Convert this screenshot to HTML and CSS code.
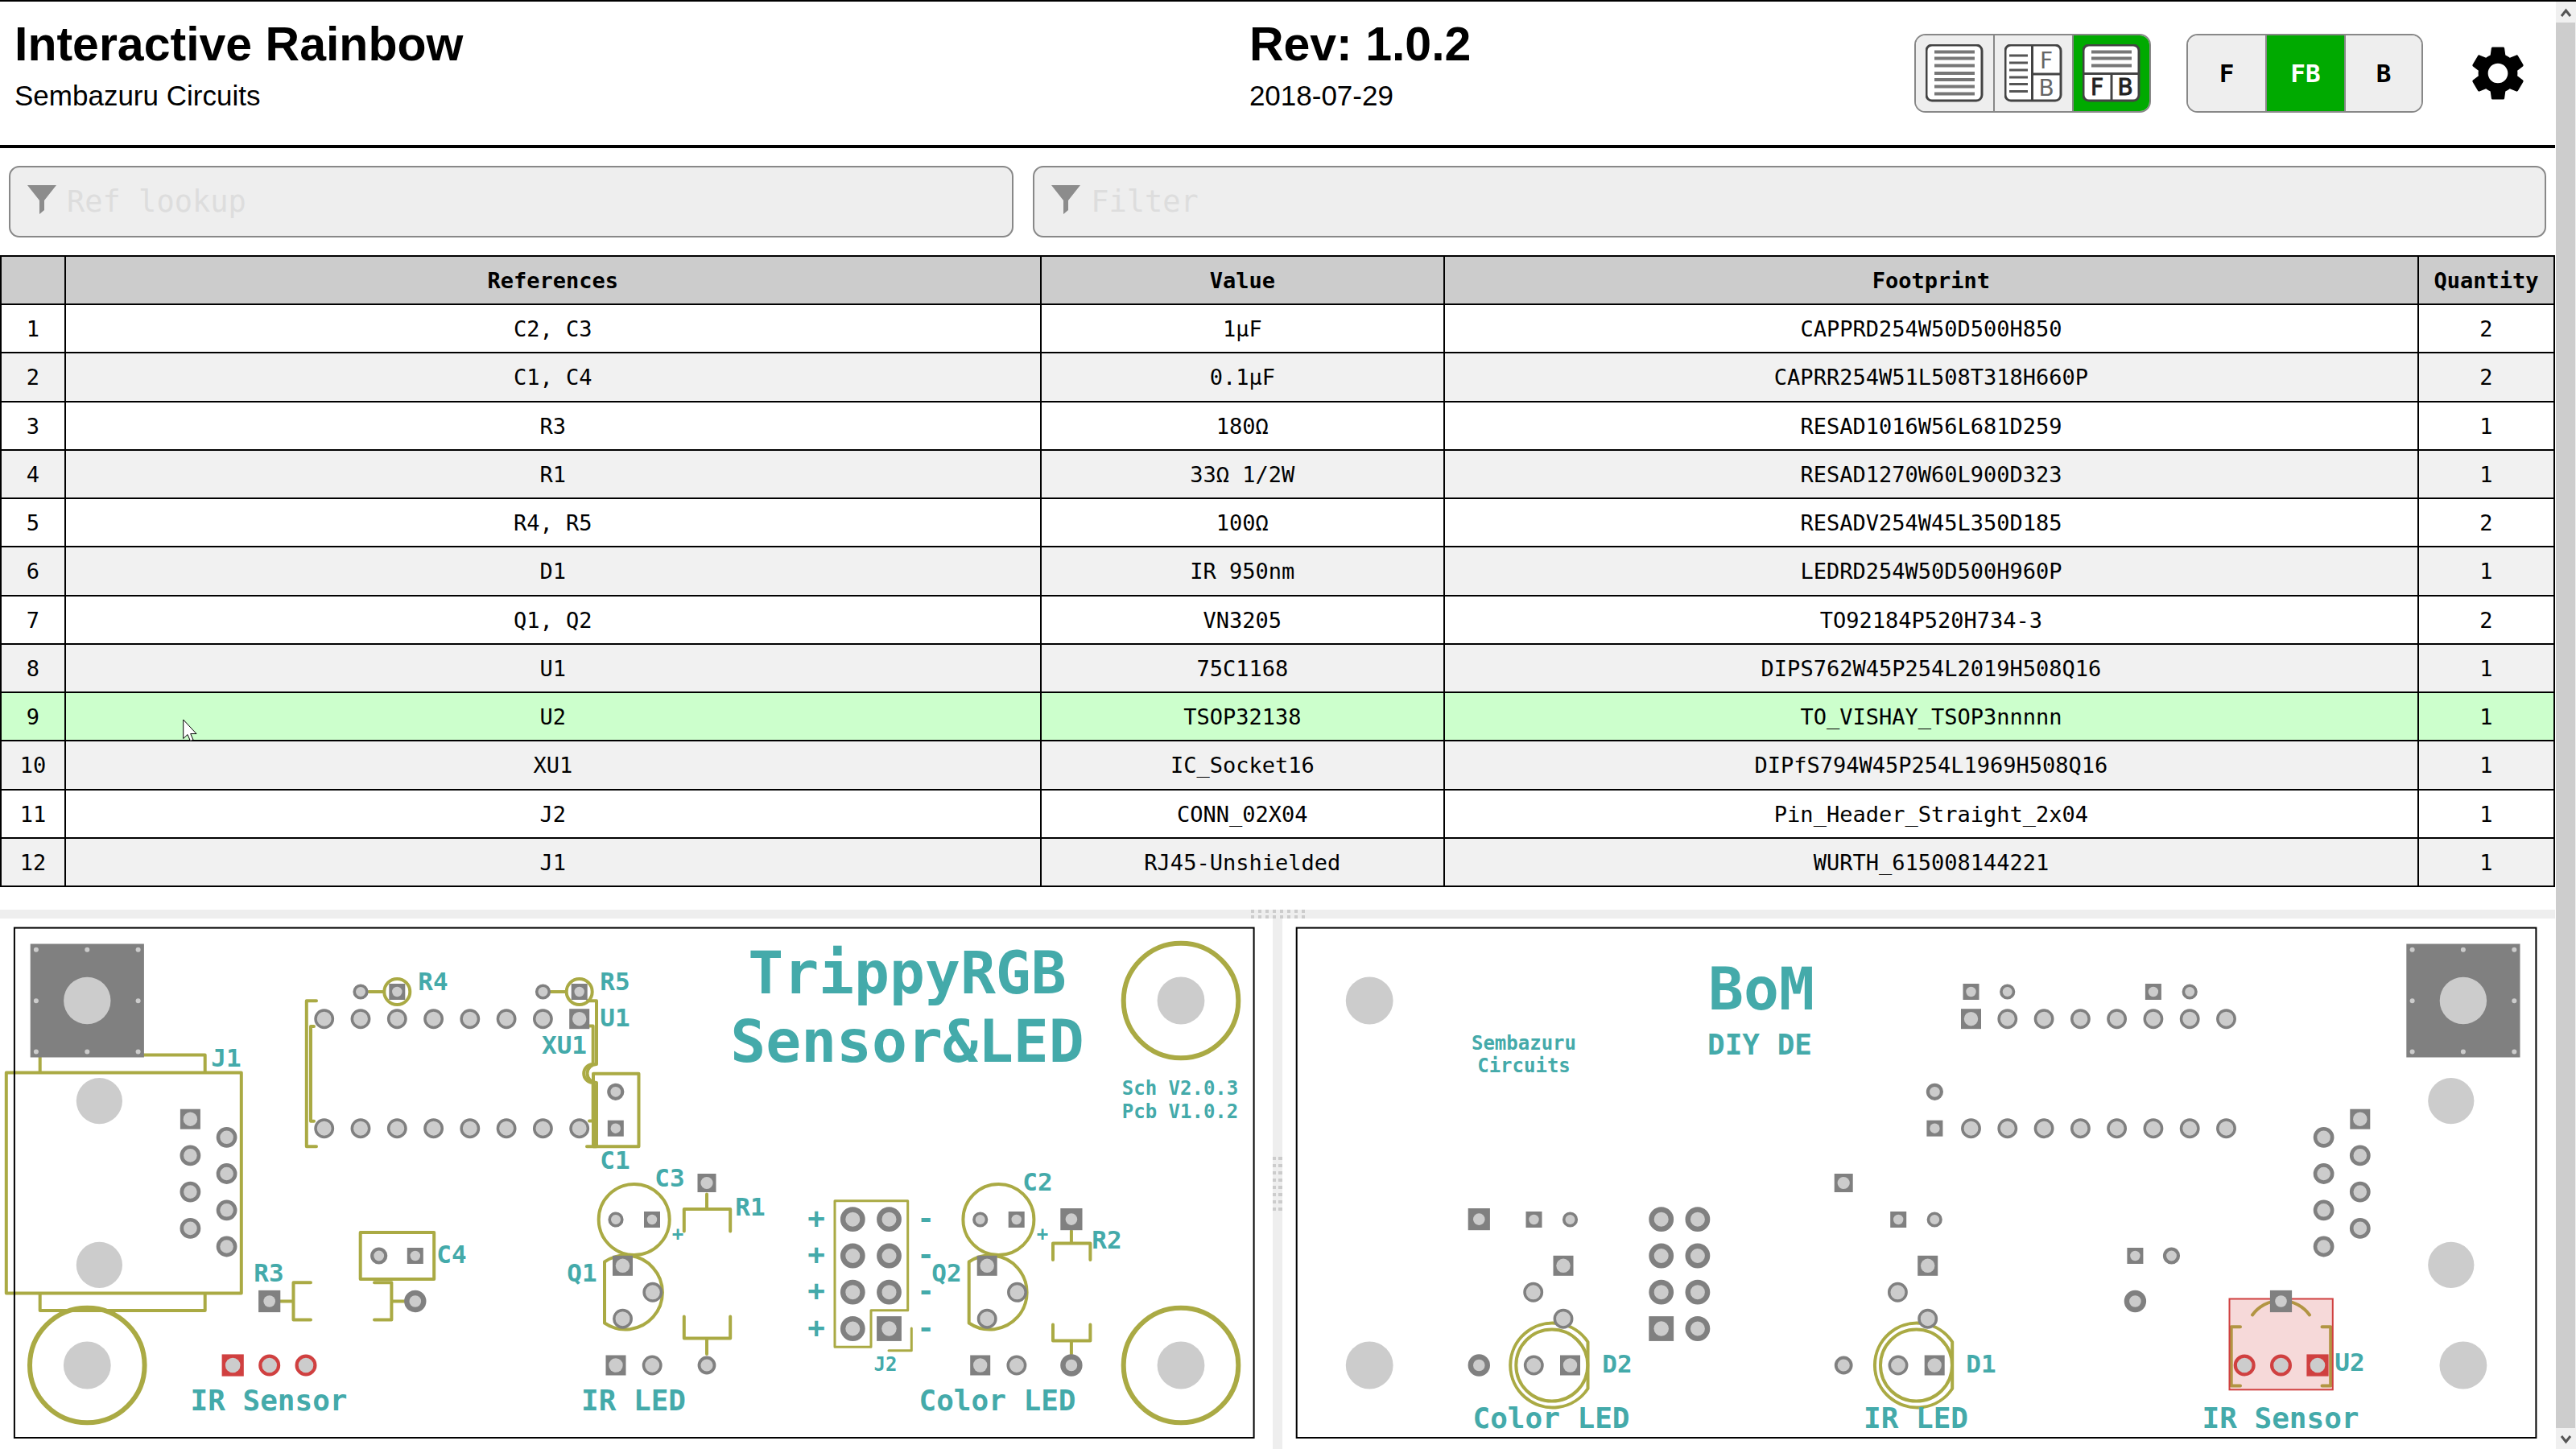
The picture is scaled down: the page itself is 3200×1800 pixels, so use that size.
FILE: index.html
```html
<!DOCTYPE html>
<html lang="en">
<head>
<meta charset="utf-8">
<meta name="viewport" content="width=device-width, initial-scale=1">
<title>Interactive BOM: Interactive Rainbow</title>
<link rel="stylesheet" href="styles.css">
</head>
<body>
<div class="window">
<main class="page">
  <header class="topbar">
    <div class="info project">
      <h1>Interactive Rainbow</h1>
      <p>Sembazuru Circuits</p>
    </div>
    <div class="info revision">
      <h2>Rev: 1.0.2</h2>
      <p>2018-07-29</p>
    </div>
    <div class="button-group" role="group" aria-label="Layout">
      <button type="button" aria-label="BOM only">
        <svg class="layout-icon" viewBox="0 0 72 72">
          <rect class="sheet" x="1" y="1" width="69" height="69" rx="7"/>
          <path class="rule" d="M11 9.500H61M11 17.500H61M11 26.500H61M11 36H61M11 44H61M11 52.500H61M11 61.500H61"/>
        </svg>
      </button>
      <button type="button" aria-label="BOM left, drawings right">
        <svg class="layout-icon" viewBox="0 0 72 72">
          <rect class="sheet" x="1" y="1" width="69" height="69" rx="7"/>
          <path class="rule dark" d="M6 14H29M6 23H29M6 32H29M6 41H29M6 49.500H29M6 58.500H29"/>
          <path class="divide" d="M34.500 1V70M34.500 37H70"/>
          <text class="light" x="52" y="30">F</text>
          <text class="light" x="52" y="64">B</text>
        </svg>
      </button>
      <button type="button" class="on" aria-label="BOM top, drawings bottom">
        <svg class="layout-icon" viewBox="0 0 72 72">
          <rect class="sheet" x="1" y="1" width="69" height="69" rx="7"/>
          <path class="rule" d="M11 9.500H61M11 17.500H61M11 26.500H61"/>
          <path class="divide" d="M1 36.500H70M36 36.500V70"/>
          <text x="18" y="63">F</text>
          <text x="53" y="63">B</text>
        </svg>
      </button>
    </div>
    <div class="button-group sides" role="group" aria-label="Board side">
      <button type="button">F</button>
      <button type="button" class="on">FB</button>
      <button type="button">B</button>
    </div>
    <button type="button" class="settings" aria-label="Settings">
      <svg viewBox="0 0 24 24"><path d="M19.430 12.980c.04-.32.07-.64.07-.98s-.03-.66-.07-.98l2.110-1.650c.19-.15.24-.42.12-.64l-2-3.460c-.12-.22-.39-.3-.61-.22l-2.490 1c-.52-.4-1.080-.73-1.690-.98l-.38-2.650C14.460 2.180 14.250 2 14 2h-4c-.25 0-.46.18-.49.42l-.38 2.650c-.61.25-1.170.59-1.690.98l-2.490-1c-.23-.09-.49 0-.61.22l-2 3.460c-.13.22-.07.49.12.64l2.110 1.650c-.04.32-.07.65-.07.98s.03.66.07.98l-2.110 1.650c-.19.15-.24.42-.12.64l2 3.460c.12.22.39.3.61.22l2.490-1c.52.4 1.080.73 1.690.98l.38 2.650c.03.24.24.42.49.42h4c.25 0 .46-.18.49-.42l.38-2.650c.61-.25 1.170-.59 1.690-.98l2.490 1c.23.09.49 0 .61-.22l2-3.460c.12-.22.07-.49-.12-.64l-2.110-1.650zM12 15.800c-2.100 0-3.800-1.700-3.800-3.800s1.700-3.800 3.800-3.800 3.800 1.700 3.800 3.800-1.700 3.800-3.800 3.800z"/></svg>
    </button>
  </header>

  <div class="filters">
    <label class="search">
      <svg viewBox="0 0 36 36" aria-hidden="true"><path d="M0 0H36L21 19V31L15 36V19Z"/></svg>
      <input type="text" placeholder="Ref lookup" aria-label="Ref lookup">
    </label>
    <label class="search">
      <svg viewBox="0 0 36 36" aria-hidden="true"><path d="M0 0H36L21 19V31L15 36V19Z"/></svg>
      <input type="text" placeholder="Filter" aria-label="Filter">
    </label>
  </div>

  <table class="bom">
    <colgroup><col class="col-num"><col class="col-refs"><col class="col-value"><col><col class="col-qty"></colgroup>
    <thead>
      <tr><th></th><th>References</th><th>Value</th><th>Footprint</th><th>Quantity</th></tr>
    </thead>
    <tbody>
      <tr><td>1</td><td>C2, C3</td><td>1µF</td><td>CAPPRD254W50D500H850</td><td>2</td></tr>
      <tr><td>2</td><td>C1, C4</td><td>0.1µF</td><td>CAPRR254W51L508T318H660P</td><td>2</td></tr>
      <tr><td>3</td><td>R3</td><td>180Ω</td><td>RESAD1016W56L681D259</td><td>1</td></tr>
      <tr><td>4</td><td>R1</td><td>33Ω 1/2W</td><td>RESAD1270W60L900D323</td><td>1</td></tr>
      <tr><td>5</td><td>R4, R5</td><td>100Ω</td><td>RESADV254W45L350D185</td><td>2</td></tr>
      <tr><td>6</td><td>D1</td><td>IR 950nm</td><td>LEDRD254W50D500H960P</td><td>1</td></tr>
      <tr><td>7</td><td>Q1, Q2</td><td>VN3205</td><td>TO92184P520H734-3</td><td>2</td></tr>
      <tr><td>8</td><td>U1</td><td>75C1168</td><td>DIPS762W45P254L2019H508Q16</td><td>1</td></tr>
      <tr class="highlighted"><td>9</td><td class="pointed">U2<svg class="pointer" viewBox="0 0 18 28" aria-hidden="true"><path d="M.7 1V24.500L6 19.500L9.500 27.500L13 26L9.700 18.500H17Z"/></svg></td><td>TSOP32138</td><td>TO_VISHAY_TSOP3nnnnn</td><td>1</td></tr>
      <tr><td>10</td><td>XU1</td><td>IC_Socket16</td><td>DIPfS794W45P254L1969H508Q16</td><td>1</td></tr>
      <tr><td>11</td><td>J2</td><td>CONN_02X04</td><td>Pin_Header_Straight_2x04</td><td>1</td></tr>
      <tr><td>12</td><td>J1</td><td>RJ45-Unshielded</td><td>WURTH_615008144221</td><td>1</td></tr>
    </tbody>
  </table>

  <div class="gutter gutter-row"><span class="grip"></span></div>

  <div class="boards">
    <svg class="board" viewBox="0 1141 1581 659" role="img" aria-label="Front of board">
      <defs>
        <circle id="pad" r="10.700" stroke-width="3.500"/>
        <circle id="pad-s" r="7.800" stroke-width="3.600"/>
        <circle id="pad-c" r="8.500" stroke-width="4.200"/>
        <circle id="pad-j" r="10.600" stroke-width="4.600"/>
        <circle id="pad-r" r="9.500" stroke-width="3.800"/>
        <circle id="pad-w" r="10.500" stroke-width="6.400"/>
        <circle id="pad-h" r="12.200" stroke-width="6.400"/>
        <circle id="pad-u" r="11.400" stroke-width="4.200"/>
        <g id="box-s"><rect class="metal" x="-10" y="-10" width="20" height="20"/><circle class="drill" r="6.200"/></g>
        <g id="box"><rect class="metal" x="-12.500" y="-12.500" width="25" height="25"/><circle class="drill" r="8.700"/></g>
        <g id="box-r"><rect class="metal" x="-11.500" y="-11.500" width="23" height="23"/><circle class="drill" r="7.600"/></g>
        <g id="box-w"><rect class="metal" x="-13.600" y="-13.600" width="27.200" height="27.200"/><circle class="drill" r="7.300"/></g>
        <g id="box-h"><rect class="metal" x="-15.400" y="-15.400" width="30.800" height="30.800"/><circle class="drill" r="9.200"/></g>
        <g id="to92-pads">
          <use href="#pad-s" x="765" y="1515"/><use href="#box-s" x="810" y="1515"/>
          <use href="#box" x="773.500" y="1572.300"/><use href="#pad" x="810.800" y="1605.300"/><use href="#pad" x="773.500" y="1638.200"/>
          <use href="#box" x="765" y="1696"/><use href="#pad" x="810.200" y="1696"/>
        </g>
        <g id="all-pads" class="pads">
          <rect class="metal" x="37.700" y="1172.500" width="141.200" height="141"/>
          <g class="drill">
            <circle cx="108.300" cy="1243" r="29.200"/>
            <circle cx="44.900" cy="1179.700" r="3"/><circle cx="108.300" cy="1179.700" r="3"/><circle cx="171.600" cy="1179.700" r="3"/>
            <circle cx="44.900" cy="1243.200" r="3"/><circle cx="171.600" cy="1243.200" r="3"/>
            <circle cx="44.900" cy="1306.600" r="3"/><circle cx="108.300" cy="1306.600" r="3"/><circle cx="171.600" cy="1306.600" r="3"/>
            <circle cx="108.300" cy="1696" r="29.400"/><circle cx="1467" cy="1243" r="29.400"/><circle cx="1467" cy="1696" r="29.400"/>
            <circle cx="123.400" cy="1367.600" r="28.600"/><circle cx="123.400" cy="1571.400" r="28.600"/>
          </g>
          <use href="#pad-s" x="448" y="1232"/><use href="#box-s" x="493.300" y="1232"/>
          <use href="#pad-s" x="674.500" y="1232"/><use href="#box-s" x="719.700" y="1232"/>
          <use href="#pad" x="402.700" y="1265.700"/><use href="#pad" x="448" y="1265.700"/><use href="#pad" x="493.300" y="1265.700"/><use href="#pad" x="538.600" y="1265.700"/><use href="#pad" x="583.800" y="1265.700"/><use href="#pad" x="629.100" y="1265.700"/><use href="#pad" x="674.400" y="1265.700"/><use href="#box" x="719.700" y="1265.700"/>
          <use href="#pad" x="402.700" y="1401.700"/><use href="#pad" x="448" y="1401.700"/><use href="#pad" x="493.300" y="1401.700"/><use href="#pad" x="538.600" y="1401.700"/><use href="#pad" x="583.800" y="1401.700"/><use href="#pad" x="629.100" y="1401.700"/><use href="#pad" x="674.400" y="1401.700"/><use href="#pad" x="719.700" y="1401.700"/>
          <use href="#pad-c" x="764.800" y="1356.300"/><use href="#box-s" x="764.800" y="1401.700"/>
          <use href="#box" x="236.400" y="1390.200"/><use href="#pad-j" x="236.400" y="1435.400"/><use href="#pad-j" x="236.400" y="1480.600"/><use href="#pad-j" x="236.400" y="1525.900"/>
          <use href="#pad-j" x="281.600" y="1412.800"/><use href="#pad-j" x="281.600" y="1458"/><use href="#pad-j" x="281.600" y="1503.300"/><use href="#pad-j" x="281.600" y="1548.500"/>
          <use href="#pad-c" x="470.700" y="1560"/><use href="#box-s" x="515.800" y="1560"/>
          <use href="#box-w" x="334.700" y="1616.500"/><use href="#pad-w" x="515.800" y="1616.500"/>
          <use href="#to92-pads"/><use href="#to92-pads" x="452.700"/>
          <use href="#box-r" x="878" y="1469.500"/><use href="#pad-r" x="878" y="1696"/>
          <use href="#box-w" x="1330.900" y="1514.600"/><use href="#pad-w" x="1330.900" y="1696"/>
          <use href="#pad-h" x="1059.300" y="1514.700"/><use href="#pad-h" x="1104.500" y="1514.700"/><use href="#pad-h" x="1059.300" y="1560"/><use href="#pad-h" x="1104.500" y="1560"/><use href="#pad-h" x="1059.300" y="1605.200"/><use href="#pad-h" x="1104.500" y="1605.200"/><use href="#pad-h" x="1059.300" y="1650.500"/><use href="#box-h" x="1104.500" y="1650.500"/>
          <g class="active">
            <rect class="metal" x="275.600" y="1682.400" width="27.200" height="27.200"/><circle class="drill" cx="289.200" cy="1696" r="9.300"/>
            <use href="#pad-u" x="334.700" y="1696"/><use href="#pad-u" x="380" y="1696"/>
          </g>
        </g>
        <g id="to92-silk">
          <circle cx="787.700" cy="1515" r="44"/>
          <path d="M751 1567.500A46 46 0 1 1 751 1643.500Z"/>
        </g>
        <g id="led-silk">
          <circle cx="1927.800" cy="1696" r="44.500"/>
          <path d="M1972.500 1667A52.500 52.500 0 1 0 1972.500 1725Z"/>
        </g>
      </defs>
      <g class="silk">
        <circle class="ring" cx="108.300" cy="1696" r="71.300"/><circle class="ring" cx="1467" cy="1243" r="71.300"/><circle class="ring" cx="1467" cy="1696" r="71.300"/>
        <path d="M7.800 1332.500H299.800V1606.600H7.800ZM49.700 1332V1310.500H254.700V1332M49.700 1607V1628H254.700V1607"/>
        <path d="M393 1243.200H380.800V1424.300H393M390 1275H386V1392.700H390"/>
        <path d="M730 1243.300H741V1322A11.500 11.500 0 0 0 741 1345V1424.300H729"/>
        <path d="M732 1274.500H736.700V1322A11.500 11.500 0 0 0 736.700 1345V1392.500H732"/>
        <path d="M737 1333.700H793.500V1424.300H737Z"/>
        <path d="M458 1232H477"/><circle cx="493.300" cy="1232" r="16"/><path d="M684 1232H703"/><circle cx="719.700" cy="1232" r="16"/>
        <path d="M447.700 1531H539.200V1589H447.700Z"/>
        <path d="M386 1593.200H364.500V1639.500H386M348 1616.500H364.500M465 1593.200H486.400V1639.500H465M486.400 1616.500H503"/>
        <path d="M878 1483.500V1502M849.800 1529.500V1502H907.200V1529.500M849.800 1635.500V1662.500H907.200V1635.500M878 1662.500V1682"/>
        <path d="M1330.900 1529V1544.500M1308 1565V1544.500H1354.400V1565M1308 1645.500V1665.500H1354.400V1645.500M1330.900 1665.500V1682"/>
        <use href="#to92-silk"/><use href="#to92-silk" x="452.700"/>
        <path class="thin" d="M1037 1491.700H1127.700V1627.800H1082V1673.300H1037ZM1132.300 1650V1677.700H1104"/>
      </g>
      <rect class="edge" x="17.900" y="1152.600" width="1539.700" height="633.400"/>
      <use href="#all-pads"/>
      <g class="label">
        <g class="huge"><text x="1127" y="1234">TrippyRGB</text><text x="1127" y="1319">Sensor&amp;LED</text></g>
        <g class="large"><text x="334" y="1752">IR Sensor</text><text x="787" y="1752">IR LED</text><text x="1239" y="1752">Color LED</text>
          <text x="1014" y="1526">+</text><text x="1014" y="1571">+</text><text x="1014" y="1616">+</text><text x="1014" y="1662">+</text>
          <text x="1150" y="1526">-</text><text x="1150" y="1571">-</text><text x="1150" y="1616">-</text><text x="1150" y="1662">-</text></g>
        <text x="538" y="1230">R4</text><text x="764" y="1230">R5</text><text x="764" y="1275">U1</text><text x="701" y="1309">XU1</text>
        <text x="281" y="1325">J1</text><text x="764" y="1452">C1</text><text x="832" y="1474">C3</text><text x="932" y="1510">R1</text>
        <text x="1289" y="1479">C2</text><text x="1375" y="1551">R2</text><text x="723" y="1592">Q1</text><text x="1176" y="1592">Q2</text>
        <text x="334" y="1592">R3</text><text x="561" y="1569">C4</text>
        <g class="small"><text x="1466" y="1360">Sch V2.0.3</text><text x="1466" y="1389">Pcb V1.0.2</text><text x="1100" y="1703">J2</text><text x="842" y="1541">+</text><text x="1295" y="1541">+</text></g>
      </g>
    </svg>

    <div class="gutter gutter-col"><span class="grip"></span></div>

    <svg class="board" viewBox="1593 1141 1581 659" role="img" aria-label="Back of board">
      <rect class="edge" x="1610.700" y="1152.600" width="1539.700" height="633.400"/>
      <g class="silk">
        <use href="#led-silk"/><use href="#led-silk" x="452.700"/>
        <path d="M2783 1648.200H2771.700V1721.500H2783M2884.500 1648.200H2895.200V1721.500H2884.500M2798 1633.500A44 44 0 0 1 2869 1633.500"/>
      </g>
      <rect class="bounds" x="2769.500" y="1613.500" width="128.300" height="112.800"/>
      <use href="#all-pads" transform="translate(3168.200 0) scale(-1 1)"/>
      <g class="label">
        <text class="huge" x="2188" y="1254">BoM</text>
        <g class="large"><text x="2186" y="1310">DIY DE</text><text x="1927" y="1774">Color LED</text><text x="2380" y="1774">IR LED</text><text x="2833" y="1774">IR Sensor</text></g>
        <g class="small"><text x="1893" y="1304">Sembazuru</text><text x="1893" y="1332">Circuits</text></g>
        <text x="2009" y="1705">D2</text><text x="2461" y="1705">D1</text><text x="2919" y="1703">U2</text>
      </g>
    </svg>
  </div>
</main>
<div class="scrollbar" aria-hidden="true">
  <svg viewBox="0 0 24 26"><path d="M7 18L12.500 11L18 18"/></svg>
  <div class="thumb"></div>
  <svg viewBox="0 0 24 26"><path d="M7 10L12.500 17L18 10"/></svg>
</div>
</div>
</body>
</html>
```
FILE: styles.css
```css
* { box-sizing: border-box; }

body {
  margin: 0;
  background: #fff;
  color: #000;
  font-family: Consolas, "DejaVu Sans Mono", monospace;
  font-size: 27px;
}

h1, h2, p { margin: 0; }

button, input { font: inherit; color: inherit; }

.window {
  display: grid;
  grid-template-columns: minmax(0, 1fr) 26px;
  min-height: 100vh;
  border-top: 2px solid #000;
}

/* Title bar */
.topbar {
  display: flex;
  align-items: center;
  padding: 0 32px 0 18px;
  border-bottom: 4px solid #000;
}

.info {
  align-self: flex-start;
  padding: 20px 0 40px;
  font-family: Arial, "Liberation Sans", sans-serif;
}

.project { flex: 0 0 49.1%; }
.revision { flex: 1; }

.info h1, .info h2 { font-size: 59px; line-height: 66px; }
.info p { margin-top: 10px; font-size: 35px; line-height: 42px; }

.button-group {
  display: flex;
  height: 98px;
  border: 2px solid #888;
  border-radius: 14px;
  overflow: hidden;
}

.sides { margin: 0 54px 0 44px; }

.button-group button {
  display: flex;
  align-items: center;
  justify-content: center;
  width: 98px;
  padding: 0;
  border: 0;
  border-right: 2px solid #888;
  background: #eee;
  font-size: 31px;
  font-weight: bold;
}

.button-group button:last-child { width: 94px; border-right: 0; }
.button-group .on { background: #0a0; color: #fff; }

.layout-icon { width: 72px; height: 72px; }
.sheet { fill: #fff; stroke: #444; stroke-width: 3; }
.rule { stroke: #777; stroke-width: 4; fill: none; }
.rule.dark { stroke: #555; stroke-width: 3; }
.divide { stroke: #444; stroke-width: 3; fill: none; }
.layout-icon text {
  font: 28px "DejaVu Sans", sans-serif;
  text-anchor: middle;
  fill: #222;
  stroke: #222;
  stroke-width: 1;
}
.layout-icon .light { fill: #666; stroke: none; }

.settings { display: flex; padding: 0; border: 0; background: none; }
.settings svg { width: 78px; height: 78px; }

/* Lookup and filter boxes */
.filters {
  display: grid;
  grid-template-columns: 39.6% 1fr;
  gap: 24px;
  padding: 22px 11px;
}

.search {
  display: flex;
  align-items: center;
  gap: 13px;
  height: 89px;
  padding: 0 21px;
  border: 2px solid #888;
  border-radius: 13px;
  background: #eee;
}

.search svg { flex: none; width: 36px; height: 36px; fill: #8c8c8c; margin-bottom: 6px; }

.search input {
  flex: 1;
  min-width: 0;
  padding: 0;
  border: 0;
  outline: 0;
  background: none;
  font-size: 37px;
}

.search input::placeholder { color: #ddd; opacity: 1; }

/* Bill of materials */
.bom {
  width: 100%;
  height: 785px;
  table-layout: fixed;
  border-collapse: collapse;
  text-align: center;
}

.col-num { width: 80px; }
.col-refs { width: 38.2%; }
.col-value { width: 15.8%; }
.col-qty { width: 169px; }

.bom th, .bom td {
  height: 60px;
  padding: 2px 0 0;
  border: 2px solid #000;
  line-height: 32px;
}

.bom th { background: #ccc; }
.bom tbody tr:nth-child(even) { background: #f1f1f1; }
.bom tbody .highlighted { background: #cfc; }

.pointed { position: relative; }
.pointer {
  position: absolute;
  left: 145px;
  top: 32px;
  width: 18px;
  height: 28px;
  fill: #fff;
  stroke: #000;
  stroke-width: 1;
}

/* Split gutters */
.gutter { display: flex; align-items: center; justify-content: center; background: #eee; }
.gutter-row { height: 11px; margin-top: 28px; }
.gutter-row .grip {
  width: 67px;
  height: 11px;
  background:
    linear-gradient(transparent 4px, #eee 4px, #eee 7px, transparent 7px),
    repeating-linear-gradient(90deg, #ccc 0, #ccc 4px, #eee 4px, #eee 9px);
}
.gutter-col .grip {
  width: 12px;
  height: 67px;
  background:
    linear-gradient(90deg, transparent 4px, #eee 4px, #eee 7px, transparent 7px),
    repeating-linear-gradient(#ccc 0, #ccc 4px, #eee 4px, #eee 9px);
}

/* Board drawings */
.boards { display: grid; grid-template-columns: 1fr 12px 1fr; }
.board { display: block; width: 100%; }

.edge { fill: none; stroke: #000; stroke-width: 2; }
.silk { fill: none; stroke: #aa4; stroke-width: 4; stroke-linecap: round; stroke-linejoin: round; }
.silk .thin { stroke-width: 3; }
.silk .ring { stroke-width: 6; }
.pads { fill: #ccc; stroke: #808080; }
.metal { fill: #808080; stroke: none; }
.drill { fill: #ccc; stroke: none; }
.active { stroke: #d04040; }
.active .metal { fill: #d04040; }
.bounds { fill: #d04040; fill-opacity: .2; stroke: #d04040; stroke-width: 2; }

.label { fill: #4aa; font-size: 31px; font-weight: bold; text-anchor: middle; }
.huge { font-size: 73px; }
.large { font-size: 36px; }
.small { font-size: 24px; }

/* Scroll bar */
.scrollbar {
  display: flex;
  flex-direction: column;
  margin-left: 1px;
  padding-right: 1px;
  background: #f0f0f0;
}
.scrollbar svg { width: 24px; height: 26px; fill: none; stroke: #555; stroke-width: 3; }
.thumb { flex: 1; background: #cdcdcd; }
```
